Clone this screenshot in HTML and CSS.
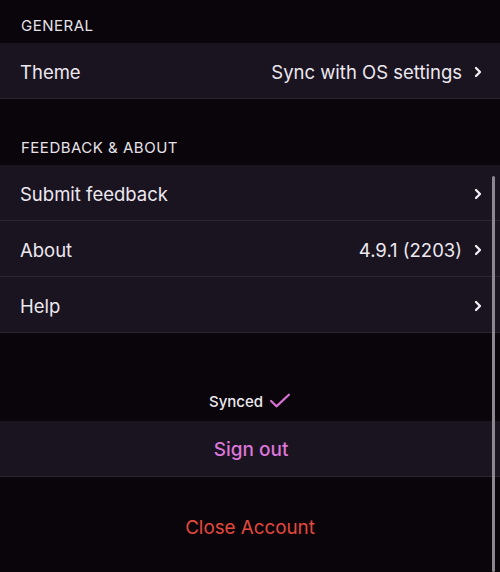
FILE: index.html
```html
<!DOCTYPE html>
<html lang="en">
<head>
    <meta charset="UTF-8">
    <meta name="viewport" content="width=device-width, initial-scale=1.0">
    <title>Settings</title>
    <link rel="stylesheet" href="styles.css">
</head>
<body>

    <div class="settings">
        <!-- General -->
        <div class="section-title">GENERAL</div>
        <div class="group">
            <div class="row">
                <span class="label">Theme</span>
                <span class="value">Sync with OS settings</span>
                <svg class="chevron" viewBox="0 0 8 12"><polyline points="2,2 6,6 2,10"/></svg>
            </div>
        </div>

        <!-- Feedback & About -->
        <div class="section-title spaced">FEEDBACK &amp; ABOUT</div>
        <div class="group">
            <div class="row">
                <span class="label">Submit feedback</span>
                <svg class="chevron" viewBox="0 0 8 12"><polyline points="2,2 6,6 2,10"/></svg>
            </div>
            <div class="row">
                <span class="label">About</span>
                <span class="value">4.9.1 (2203)</span>
                <svg class="chevron" viewBox="0 0 8 12"><polyline points="2,2 6,6 2,10"/></svg>
            </div>
            <div class="row">
                <span class="label">Help</span>
                <svg class="chevron" viewBox="0 0 8 12"><polyline points="2,2 6,6 2,10"/></svg>
            </div>
        </div>

        <!-- Account -->
        <div class="sync-status">
            Synced
            <svg class="check" viewBox="0 0 24 18"><polyline points="2,9 8,15 22,2"/></svg>
        </div>
        <div class="group">
            <div class="row center">
                <span class="sign-out">Sign out</span>
            </div>
        </div>
        <div class="close-account">Close Account</div>

        <div class="scrollbar"></div>
    </div>

</body>
</html>
```

FILE: styles.css
```css
body {
    margin: 0;
    padding: 0;
    background: #09050a;
    font-family: Inter, "Noto Sans", sans-serif;
    color: #ece8ef;
}

.settings {
    position: relative;
    height: 572px;
    overflow: hidden;
}

/* Section headers */
.section-title {
    padding: 16px 21px 8px;
    font-size: 15px;
    line-height: 19px;
    font-weight: 400;
    letter-spacing: 0.5px;
    color: #e6e2e8;
}

.section-title.spaced {
    margin-top: 23px;
}

.group {
    background: #1a1320;
}

.row {
    box-sizing: border-box;
    display: flex;
    align-items: center;
    height: 56px;
    padding: 2px 18px 0 20px;
    border-bottom: 1px solid #2c2532;
    font-size: 18.5px;
}

.row.center {
    justify-content: center;
}

.label {
    flex: 1;
}

.value {
    margin-right: 12px;
}

.chevron {
    width: 8px;
    height: 12px;
    fill: none;
    stroke: #f2eef4;
    stroke-width: 2.3;
    stroke-linecap: round;
    stroke-linejoin: round;
}

/* Sync + account */
.sync-status {
    display: flex;
    justify-content: center;
    align-items: center;
    gap: 6px;
    margin-top: 48px;
    height: 40px;
    font-size: 15px;
    font-weight: 500;
}

.check {
    width: 22px;
    height: 16px;
    fill: none;
    stroke: #d770d2;
    stroke-width: 2.5;
    stroke-linecap: round;
    stroke-linejoin: round;
}

.sign-out {
    color: #db76d8;
    font-size: 19px;
    font-weight: 500;
}

.close-account {
    margin-top: 40px;
    text-align: center;
    font-size: 18.8px;
    line-height: 22px;
    color: #e4483e;
}

.scrollbar {
    position: absolute;
    top: 176px;
    right: 5px;
    width: 3px;
    bottom: 0;
    background: #8b8690;
    border-radius: 2px;
}
```
